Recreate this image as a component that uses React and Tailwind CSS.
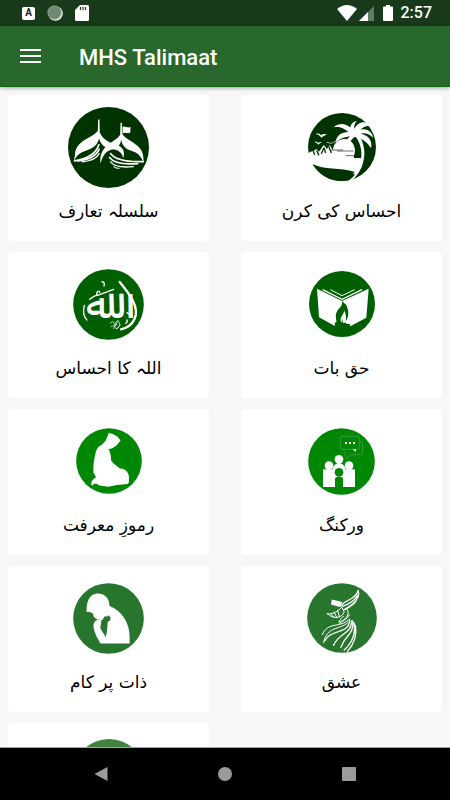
function DomesIcon() {
  return (
    <svg viewBox="205 53 242 242" className="size-[81px]" aria-hidden="true">
      <circle cx="326" cy="174" r="121" fill="#003300" />
      <g fill="#fff">
        <path d="M295 90h4l1 34h-6z" />
        <path d="M297 114C296 144 226 146 226 196L222 216C232 192 246 188 262 182C282 174 294 166 298 146C304 176 330 176 344 180C360 184 368 194 370 206C380 178 358 166 338 162C314 152 300 140 297 114z" />
        <path d="M362 100h4l1 36h-6z" />
        <path d="M364 126C360 160 296 156 302 222C308 200 318 184 336 180C352 176 362 166 364 150C368 176 384 180 400 186C416 192 426 204 430 220C438 156 374 160 364 126z" />
        <path d="M368 112c8-3 14 5 24 1l-1 16c-8 5-15-3-23 3z" />
      </g>
      <g fill="none" stroke="#fff" strokeWidth="5" strokeLinecap="round">
        <path d="M297 166c-8 28-36 42-72 48" />
        <path d="M298 179c-8 20-34 32-64 35" />
        <path d="M298 192c-6 14-24 22-50 25" strokeWidth="4" />
        <path d="M332 192c12 16 40 26 98 24" />
        <path d="M329 204c12 16 36 22 84 18" />
        <path d="M332 217c12 14 34 18 68 14" strokeWidth="4" />
        <path d="M342 231c6 5 10 6 16 5" strokeWidth="3" />
      </g>
    </svg>
  );
}

function PalmIcon() {
  return (
    <svg viewBox="249 73 204 204" className="size-[68px]" aria-hidden="true">
      <circle cx="351" cy="175" r="102" fill="#003300" />
      <path d="M246 197l10-8 10-2 8-6 8 8 14-20 10 12 8-12 10 16 2 8c-8-22 12-42 32-42c20 0 32 16 32 36l-4 21h20l6 6-2 20-18 24c-30-12-80-8-126-30l-22-8z" fill="#fff" />
      <path d="M384 134c24 26 32 60 20 94c-4 18-14 34-34 48h10c26-20 40-58 38-88c-2-26-12-46-26-60z" fill="#fff" />
      <g fill="#fff">
        <path d="M392 142c-10-30-40-48-66-26c22-4 34 6 44 14c-20 0-36 10-38 31c16-16 30-14 44-20c-14 12-16 26-12 42c4-20 14-28 24-38c16 2 36 10 50 34c6-24-10-40-30-44c14-4 26 2 36 12c-2-18-18-28-38-24c8-8 18-12 28-12c-14-18-36-10-46 10c-2-10 2-18 8-24c-20 2-24 22-18 44z" />
        <path d="M272 136c8-3 12 0 17 4c4-5 10-5 17-2c-8 1-12 5-17 9c-4-6-9-9-17-11zM268 160c6-2 9 0 12 3c3-4 6-4 11-2c-6 2-8 4-11 7c-3-4-6-6-12-8z" />
      </g>
      <g stroke="#003300" fill="none">
        <path d="M318 184h36M336 187h50M362 201h26" strokeWidth="2" />
        <path d="M265 188l4 10M275 186l7 14M297 177l-8 18M297 177l5 16M311 173l8 20" strokeWidth="4" />
        <path d="M305 161l15 3 22-12" stroke="#fff" strokeWidth="2" />
      </g>
      <path d="M263 227c32 18 84 8 126 23l-21 25c-44 8-82-10-105-48z" fill="#003300" />
    </svg>
  );
}

function CalligraphyIcon() {
  return (
    <svg viewBox="216 59 213 213" className="size-[71px]" aria-hidden="true">
      <circle cx="322.500" cy="165.500" r="106" fill="#005f00" />
      <text x="292" y="206" textAnchor="middle" fill="#fff" fontSize="124" fontFamily="'DejaVu Sans', sans-serif">ﷲ</text>
      <g fill="none" stroke="#fff" strokeLinecap="round">
        <path d="M356 98c28 34 62 76 44 112c-8 18-22 26-40 30" strokeWidth="7" />
        <path d="M266 150c10-8 16-12 22-12c-4-12 8-16 8-8M290 138l48-18" strokeWidth="4" />
        <path d="M303 98c6-2 8 4 6 12" strokeWidth="4" />
        <path d="M328 222q8-12 12 2t8-4 8 8M330 232q10-6 12 2t12-2M338 238l8-22M348 240l10-14" strokeWidth="2" />
        <path d="M250 168c-6 20 0 38 8 44M374 222q6-2 4-10M378 190l8 6 8-8" strokeWidth="4" />
      </g>
    </svg>
  );
}

function BookIcon() {
  return (
    <svg viewBox="249 65 198 198" className="size-[66px]" aria-hidden="true">
      <circle cx="348" cy="164" r="99" fill="#005f00" />
      <path d="M273 118l75 37 80-37-7 87-48 26c-2-8-10-4-16-12c12-16 14-34 2-54c-6-4-9-6-11-8c4 20-16 26-18 42c-2 12 6 20-2 32l-49-27z" fill="#fff" />
      <g fill="none" stroke="#fff">
        <path d="M290 121l58 29 60-29" strokeWidth="4" />
        <path d="M313 121l35 18 38-18" strokeWidth="3" />
      </g>
      <path d="M348 155c20 18 20 42 11 60c2-14-2-22-7-31c-4 10-12 16-10 35c-18-12-14-28-4-40c8-8 12-14 10-24z" fill="#005f00" />
      <path d="M355 184c5 10 6 18 4 34c-4 4-10 4-14 0c-4-14 6-20 10-34z" fill="#fff" />
      <path d="M326 220c14-4 26 6 46 4l-2 10c-14 8-30 8-43 0zM348 206l3 14h-4z" fill="#005f00" />
    </svg>
  );
}

function PrayerIcon() {
  return (
    <svg viewBox="225 70 197 197" className="size-[66px]" aria-hidden="true">
      <circle cx="323.500" cy="168.500" r="98" fill="#008805" />
      <path d="M323 85l12 3 14 8 9 11-12 15-14 9-10 2c6 10 7 20 8 34l8 10 18 14c12 0 20 6 24 14c5 8 2 20 3 28l-4 4-32 3-26 5-26-3-10-6-8 1-1 5-6-2 2-12 8-8 5-3-8-14c-1-20 1-36 6-56c2-12 8-22 18-26l12-12z" fill="#fff" />
    </svg>
  );
}

function TeamIcon() {
  return (
    <svg viewBox="246 69 201 201" className="size-[67px]" aria-hidden="true">
      <circle cx="346.500" cy="169.500" r="100" fill="#008805" />
      <path d="M401 111h4q5 0 5 5v28q0 5-5 5h-31l-12 12-4-12q-3-2-3-6v-7M345 94h51q5 0 5 5v29q0 5-5 5h-48q-5 0-5-5V99q0-4 2-5z" fill="none" stroke="#4fa853" strokeWidth="2" />
      <g fill="#fff">
        <path d="M357 111h6v6h-6zM369 111h6v6h-6zM381 111h6v6h-6zM380 133h10v8z" />
        <path d="M291 193h96v53h-96z" />
        <circle cx="309" cy="182" r="13" />
        <circle cx="369" cy="182" r="13" />
        <circle cx="339" cy="163" r="13" />
        <path d="M320 196c0-28 38-28 38 0z" />
      </g>
      <g fill="#008805">
        <circle cx="339" cy="202" r="13" />
        <path d="M327 246v-24q0-6 6-6h12q6 0 6 6v24z" />
      </g>
    </svg>
  );
}

function ThinkerIcon() {
  return (
    <svg viewBox="221 67 212 212" className="size-[71px]" aria-hidden="true">
      <circle cx="327" cy="173" r="105.500" fill="#28762d" />
      <path d="M261 152c2-12 0-22 6-34c8-22 34-24 48-14c12 8 14 18 15 32c36 14 60 50 60 90v22h-87c-8-14-18-30-21-50c0-10 2-14 7-20l-3-8c-6-2-3-8-5-11c-8-8-14-4-20-7z" fill="#fff" />
      <path d="M286 171c6 6 14 8 22 7l8-12 8 1 2-4 7 6-1 10-7 4c-2 12-1 30-6 46l-16-26c-1-12 4-18 2-25c-6-3-12-3-17 4z" fill="#28762d" />
    </svg>
  );
}

function DervishIcon() {
  return (
    <svg viewBox="242 70 211 211" className="size-[70px]" aria-hidden="true">
      <circle cx="347.500" cy="175.500" r="105" fill="#28762d" />
      <path d="M317 120l31 7-5 15c-10-2-20-4-29-8z" fill="#fff" />
      <g fill="none" stroke="#fff" strokeWidth="4" strokeLinecap="round" strokeLinejoin="round">
        <path d="M346 139c6-18 44-18 50-47c8 22-14 44-42 58M350 140c18-6 34-16 44-32M356 150c12-6 26-14 34-26" />
        <path d="M303 163c20 2 34-10 44-20l7 14c-6 18-32 24-50 6zM314 162l8 12M324 158l8 17M334 152l6 20" strokeWidth="3" />
        <path d="M362 148c14 18-8 32-22 44M352 170c-4 6-14 12-14 18c12-2 26-10 32-22" strokeWidth="3" />
        <path d="M366 182c-26 24-62 4-78 44M364 190c-22 22-62 8-72 60" strokeWidth="3" />
        <path d="M370 180c2 46-58 28-74 64M376 184c2 40-38 36-54 74M380 184c4 44-22 40-36 80M384 190c6 36-6 60-30 82M388 198c6 34-4 56-24 78" />
      </g>
    </svg>
  );
}

function PlainIcon() {
  return (
    <svg viewBox="0 0 72 72" className="size-[72px]" aria-hidden="true">
      <circle cx="36" cy="36" r="36" fill="#40823f" />
    </svg>
  );
}

const topics = [
  { title: "سلسلہ تعارف", Icon: DomesIcon },
  { title: "احساس کی کرن", Icon: PalmIcon },
  { title: "اللہ کا احساس", Icon: CalligraphyIcon },
  { title: "حق بات", Icon: BookIcon },
  { title: "رموزِ معرفت", Icon: PrayerIcon },
  { title: "ورکنگ", Icon: TeamIcon },
  { title: "ذات پر کام", Icon: ThinkerIcon },
  { title: "عشق", Icon: DervishIcon },
  { title: "", Icon: PlainIcon },
];

function StatusBar() {
  return (
    <div className="flex h-[26px] shrink-0 items-center justify-between bg-[#183a1b] pr-[18px] pl-[22px] text-white">
      <div className="flex items-center gap-3">
        <span className="flex size-[13px] items-center justify-center rounded-[2px] bg-white text-[10px] leading-none font-bold text-[#222]">A</span>
        <svg viewBox="0 0 16 16" className="size-4" aria-hidden="true">
          <circle cx="8.500" cy="8.500" r="7.300" fill="#e8eee8" />
          <circle cx="7.500" cy="7.500" r="7" fill="#6d8a70" />
          <circle cx="7.500" cy="7.500" r="6.500" fill="none" stroke="#a9bcab" strokeDasharray="1 1" />
        </svg>
        <svg viewBox="0 0 14 16" className="h-4 w-[14px]" aria-hidden="true">
          <path d="M5 0h7.500q1.500 0 1.500 1.500v13q0 1.500-1.500 1.500h-11Q0 16 0 14.500V5z" fill="#fff" />
          <path d="M5.500 2v3M8 2v3M10.500 2v3" stroke="#183a1b" strokeWidth="1.200" />
        </svg>
      </div>
      <div className="flex items-center">
        <svg viewBox="0 0 20 16" className="h-4 w-5" aria-hidden="true">
          <path d="M0 4Q10-4 20 4L10 16z" fill="#fff" />
        </svg>
        <svg viewBox="0 0 15 15" className="ml-0.5 size-[15px]" aria-hidden="true">
          <path d="M15 0v15H0z" fill="#5f7d62" />
          <path d="M9 6v9H0z" fill="#fff" />
        </svg>
        <svg viewBox="0 0 10 16" className="ml-[9px] h-4 w-[10px]" aria-hidden="true">
          <path d="M3 0h4v1.500h2q1 0 1 1V15q0 1-1 1H1q-1 0-1-1V2.500q0-1 1-1h2z" fill="#fff" />
        </svg>
        <span className="ml-2 text-base leading-5 font-medium">2:57</span>
      </div>
    </div>
  );
}

export default function App() {
  return (
    <div className="flex h-screen flex-col bg-[#f7f7f7] font-['Roboto','DejaVu_Sans',sans-serif]">
      <StatusBar />
      <header className="z-10 flex h-[61px] shrink-0 items-center gap-[38px] border-b border-[#086a0c] bg-[#28682c] px-5 text-white shadow-[0_1px_4px_rgba(0,0,0,0.35)]">
        <button type="button" aria-label="Open menu" className="flex w-[21px] flex-col gap-1">
          <span className="h-0.5 w-full bg-white" />
          <span className="h-0.5 w-full bg-white" />
          <span className="h-0.5 w-full bg-white" />
        </button>
        <h1 className="pt-1 text-[22px] leading-7 font-medium">MHS Talimaat</h1>
      </header>
      <main className="min-h-0 flex-1 overflow-y-auto px-2 pt-2 [scrollbar-width:none]">
        <div className="grid grid-cols-2 gap-x-8 gap-y-[11px]">
          {topics.map(({ title, Icon }, index) => (
            <button
              key={index}
              type="button"
              className="flex h-[146px] flex-col items-center rounded bg-white pt-3"
            >
              <span className="flex h-20 items-center justify-center">
                <Icon />
              </span>
              <span dir="rtl" lang="ur" className="mt-2 font-['DejaVu_Sans',sans-serif] text-[17px] leading-8 text-black">
                {title}
              </span>
            </button>
          ))}
        </div>
      </main>
      <nav className="flex h-[53px] shrink-0 items-center justify-center gap-[110px] border-t border-[#9fa99f] bg-black">
        <button type="button" aria-label="Back">
          <svg viewBox="0 0 14 14" className="size-[14px]" fill="#9b9b9b" aria-hidden="true">
            <path d="M13.500 0v14L.5 7z" />
          </svg>
        </button>
        <button type="button" aria-label="Home" className="size-[14px] rounded-full bg-[#9b9b9b]" />
        <button type="button" aria-label="Recent apps" className="size-[14px] rounded-[1px] bg-[#9b9b9b]" />
      </nav>
    </div>
  );
}
